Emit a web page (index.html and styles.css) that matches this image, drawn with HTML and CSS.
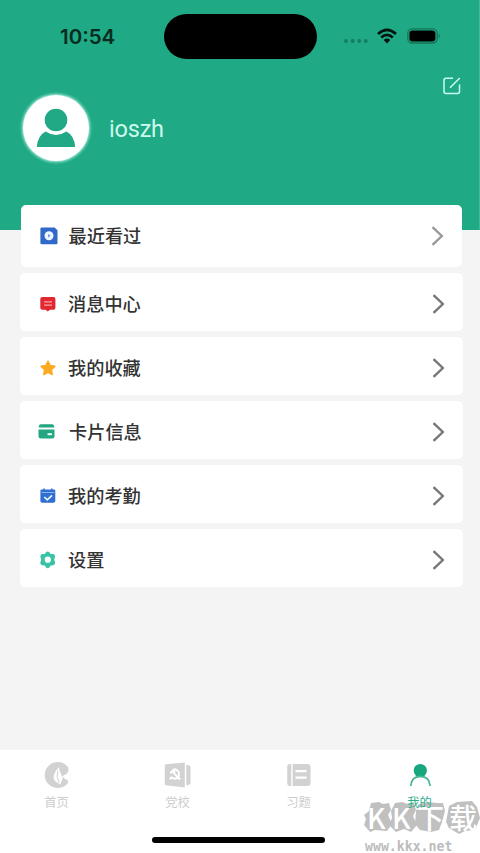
FILE: index.html
```html
<!DOCTYPE html>
<html lang="zh-CN">
<head>
<meta charset="utf-8">
<title>我的</title>
<link rel="stylesheet" href="styles.css">
</head>
<body>
<div class="screen">
  <header class="hero">
    <div class="status">
      <span class="time">10:54</span>
      <span class="island"></span>
      <div class="signals">
        <svg class="dots" width="26" height="6" viewBox="0 0 26 6"><g fill="#137c60"><circle cx="3" cy="3" r="1.9"/><circle cx="9.6" cy="3" r="1.9"/><circle cx="16.2" cy="3" r="1.9"/><circle cx="22.8" cy="3" r="1.9"/></g></svg>
        <svg class="wifi" width="20" height="16" viewBox="0 0 20 16"><g fill="none" stroke="#03130e" stroke-width="2.7"><path d="M1 6Q10-2.2 19 6"/><path d="M4.2 9.4Q10 4.2 15.8 9.4"/></g><path d="M6.7 12Q10 9.2 13.3 12L10 15.4Z" fill="#03130e"/></svg>
        <svg class="battery" width="34" height="16" viewBox="0 0 34 16"><rect x=".8" y=".8" width="29.4" height="14.2" rx="4.5" fill="none" stroke="#137657" stroke-width="1.3"/><rect x="2.4" y="2.4" width="26" height="11" rx="3" fill="#000"/><path d="M31.6 5.5Q34 7.9 31.6 10.4Z" fill="#137657"/></svg>
      </div>
    </div>
    <div class="tools">
      <svg width="18" height="18" viewBox="0 0 18 18" fill="none" stroke="#c9fff0" stroke-width="1.5"><path d="M10 1.2H3Q1 1.2 1 3.2V14.5Q1 16.5 3 16.5H14.5Q16.5 16.5 16.5 14.5V7.5M7 10.8L16.8 1"/></svg>
    </div>
    <div class="profile">
      <div class="avatar">
        <svg width="40" height="40" viewBox="0 0 40 40" fill="#20a984"><circle cx="20" cy="12" r="11.3"/><path d="M.8 39Q1.8 27.5 9.6 23.6Q20 30.5 30.4 23.6Q38.2 27.5 39.2 39Z"/></svg>
      </div>
      <span class="name">ioszh</span>
    </div>
  </header>
  <main class="menu">
    <div class="row first">
      <svg class="icon" width="18" height="18" viewBox="0 0 18 18"><path d="M1.8.5H14.6L17.5 3.2V16Q17.5 17.2 16.3 17.2H1.8Q.4 17.2.4 16V1.8Q.4.5 1.8.5Z" fill="#3069c7"/><circle cx="9" cy="8.8" r="4.5" fill="#eef6ff"/><path d="M8 7.1L10.8 8.8L8 10.5Z" fill="#6f9be0"/></svg>
      <span class="label">最近看过</span>
      <svg class="chevron" width="13" height="20" viewBox="0 0 13 20"><path d="M1.5 1.2L10.8 10L1.5 18.8"/></svg>
    </div>
    <div class="row">
      <svg class="icon" width="18" height="18" viewBox="0 0 18 18"><path d="M3.3 2H14.5Q16.4 2 16.4 4V13Q16.4 14.8 14.5 14.8H11L8.8 16.6L6.6 14.8H3.3Q1.3 14.8 1.3 13V4Q1.3 2 3.3 2Z" fill="#e12730"/><path d="M5 6.8H13M5 10.1H13" stroke="#ffa2a5" stroke-width="1.2"/></svg>
      <span class="label">消息中心</span>
      <svg class="chevron" width="13" height="20" viewBox="0 0 13 20"><path d="M1.5 1.2L10.8 10L1.5 18.8"/></svg>
    </div>
    <div class="row">
      <svg class="icon" width="18" height="18" viewBox="0 0 18 18"><path d="M9 2L11.2 6.5L16 7.2L12.5 10.7L13.3 15.6L9 13.4L4.7 15.6L5.5 10.7L2 7.2L6.8 6.5Z" fill="#fbaa22" stroke="#fbaa22" stroke-width="1.3" stroke-linejoin="round"/></svg>
      <span class="label">我的收藏</span>
      <svg class="chevron" width="13" height="20" viewBox="0 0 13 20"><path d="M1.5 1.2L10.8 10L1.5 18.8"/></svg>
    </div>
    <div class="row card">
      <svg class="icon" width="18" height="18" viewBox="0 0 18 18" fill="#23a783"><path d="M.7 4.5Q.8 1.2 3 1.2H14Q16.2 1.2 16.3 4.5Z"/><path d="M.5 6.6H16.5V13Q16.5 15.5 14 15.5H3Q.5 15.5.5 13Z"/><path d="M9.5 10.2H14V12.2H9.5Z" fill="#e3fff7"/></svg>
      <span class="label">卡片信息</span>
      <svg class="chevron" width="13" height="20" viewBox="0 0 13 20"><path d="M1.5 1.2L10.8 10L1.5 18.8"/></svg>
    </div>
    <div class="row">
      <svg class="icon" width="18" height="18" viewBox="0 0 18 18"><path d="M2.7 2.6H15Q16.3 2.6 16.3 4V14Q16.3 15.8 14.5 15.8H3.2Q1.4 15.8 1.4 14V4Q1.4 2.6 2.7 2.6Z" fill="#306fd1"/><path d="M5 1.4V4M12.8 1.4V4" stroke="#306fd1" stroke-width="1.6"/><path d="M2.5 5.5H15.3" stroke="#85b3f3"/><path d="M5.3 10L8.3 12.8L13 8.3" fill="none" stroke="#e9f4ff" stroke-width="1.7"/></svg>
      <span class="label">我的考勤</span>
      <svg class="chevron" width="13" height="20" viewBox="0 0 13 20"><path d="M1.5 1.2L10.8 10L1.5 18.8"/></svg>
    </div>
    <div class="row">
      <svg class="icon" width="18" height="18" viewBox="0 0 18 18"><path d="M7 1.3Q8.7-.2 10.4 1.3L11.7 3L14.2 3.1Q16.5 3.8 15.9 6.1L15.2 8.8L16 11.2Q16.4 13.7 14.2 14.3L11.7 14.6L10.3 16.4Q8.7 18 7.1 16.4L5.7 14.6L3.2 14.3Q1 13.7 1.4 11.2L2.2 8.8L1.5 6.1Q.9 3.8 3.2 3.1L5.7 3Z" fill="#39c2a5"/><circle cx="8.8" cy="8.7" r="3.1" fill="#fff"/></svg>
      <span class="label">设置</span>
      <svg class="chevron" width="13" height="20" viewBox="0 0 13 20"><path d="M1.5 1.2L10.8 10L1.5 18.8"/></svg>
    </div>
  </main>
  <footer class="dock">
    <nav class="tabs">
      <div class="tab">
        <svg width="28" height="28" viewBox="0 0 28 28"><path d="M24.6 5.6A13 13 0 1 0 24.8 22.2Q26 19.5 23.2 18.6Q20.5 17.8 20.5 14.5Q21.5 13.8 23.2 13.2Q25.8 11.8 25.5 8Q25.5 6.6 24.6 5.6Z" fill="#d2d2d2"/><path d="M16.3 5.7Q15.5 9.5 17.8 12.5Q20.7 17 16.6 23Q9 20.5 11 13.8Q12 10 16.3 5.7Z" fill="#fff"/><path d="M14.9 9.8Q12.7 16 16.2 22" fill="none" stroke="#d2d2d2"/><path d="M17 23Q18 17.5 21 15" fill="none" stroke="#fff" stroke-width="1.2"/></svg>
        <span>首页</span>
      </div>
      <div class="tab">
        <svg width="28" height="28" viewBox="0 0 28 28"><path d="M2 3.3L20.8 1.4V26.4L2 24.3Q.8 24.3.8 23V4.5Q.8 3.3 2 3.3Z" fill="#d2d2d2"/><path d="M22.3 3.8Q26.5 4.3 26.5 6.6V21.8Q26.5 24 22.3 24.5Z" fill="#d2d2d2"/><path d="M9.6 8Q16.4 9.3 14.8 15.2Q12.4 19.5 7 16.2M5.8 18.2L8.1 15.7M6.2 12.3L9 9.5L11.2 11.5M9 11.4L16.2 18.5" fill="none" stroke="#fff" stroke-width="2"/></svg>
        <span>党校</span>
      </div>
      <div class="tab">
        <svg width="28" height="28" viewBox="0 0 28 28"><path d="M5 3H6.2V25H5Q2.2 25 2.2 22V6Q2.2 3 5 3Z" fill="#d2d2d2"/><path d="M7.6 3H22.5Q25.5 3 25.5 6V22Q25.5 25 22.5 25H7.6Z" fill="#d2d2d2"/><path d="M10.5 10.1H21.5M10.5 16.6H21.5" stroke="#fff" stroke-width="2.2"/></svg>
        <span>习题</span>
      </div>
      <div class="tab active">
        <svg width="28" height="28" viewBox="0 0 28 28"><circle cx="14.3" cy="9.5" r="6.6" fill="#17a77f"/><path d="M4.7 25Q5.2 15.7 14.4 15.4Q23.6 15.7 24.1 25" fill="none" stroke="#46b395" stroke-width="1.7"/></svg>
        <span>我的</span>
      </div>
    </nav>
    <div class="home-bar"></div>
    <div class="watermark">
      <div class="brand">
        <svg class="blobs" width="118" height="34" viewBox="0 0 118 34" fill="#c0c0c1"><path d="M8 2L16 1L20 3L26 2L28 9L25 14L29 23L24 30L12 29L7 31L1 24L3 18L1 14L6 10Z"/><path d="M32 2L39 1L45 3L51 2L53 9L50 15L54 24L48 31L41 28L33 31L26 24L29 17L28 10Z"/><path d="M56 3L66 1L74 2L80 2L82 10L79 21L76 29L68 31L57 29L52 23L53 10Z"/><path d="M86 5L94 1L109 0L114 6L117 17L112 29L102 30L96 33L86 27L83 21Z"/></svg>
        <span class="brand-text"><b>K</b><b>K</b><b>下</b><b>载</b></span>
      </div>
      <span class="site">www.kkx.net</span>
    </div>
  </footer>
</div>
</body>
</html>
```
FILE: styles.css
```css
* { box-sizing: border-box; }
body {
  margin: 0;
  font-family: Inter, "Noto Sans CJK SC", sans-serif;
}
svg { display: block; flex: none; }
.screen {
  width: 480px;
  height: 853px;
  display: flex;
  flex-direction: column;
  background: #f4f4f4;
  overflow: hidden;
}
.hero {
  height: 230px;
  flex: none;
  background: #20a985;
  border-right: 1px solid #43b798;
}
.status {
  height: 73px;
  display: grid;
  grid-template-columns: 164px 153px 1fr;
  align-items: center;
}
.time {
  padding-left: 60px;
  font-size: 20.5px;
  font-weight: 600;
  color: #062c21;
  line-height: 24px;
}
.island { height: 45px; border-radius: 23px; background: #000; }
.signals { display: flex; align-items: center; padding-left: 26px; }
.dots { margin-top: 9px; }
.wifi { margin-left: 8px; margin-top: -1px; }
.battery { margin-left: 10px; margin-top: -2px; }
.tools {
  height: 21px;
  padding: 4px 18px 0 0;
  display: flex;
  justify-content: flex-end;
}
.profile { height: 68px; display: flex; align-items: center; padding-left: 23px; }
.avatar {
  width: 66px;
  height: 66px;
  border-radius: 50%;
  background: #fff;
  box-shadow: 0 0 3px 1px #b5f5e3;
  display: flex;
  align-items: center;
  justify-content: center;
}
.name {
  margin-left: 20px;
  padding-top: 1px;
  font-family: Roboto, sans-serif;
  font-size: 23.5px;
  letter-spacing: -.2px;
  color: #cbfbec;
}
.menu {
  flex: 1;
  margin-top: -25px;
  padding: 0 17px 0 19.5px;
  display: flex;
  flex-direction: column;
  gap: 6px;
}
.row {
  height: 58px;
  flex: none;
  border-radius: 5px;
  background: #fff;
  display: flex;
  align-items: center;
  padding: 3px 18px 0 19.5px;
}
.row.first { height: 62px; margin: 0 1px 0 1.5px; padding-top: 0; padding-left: 18.5px; }
.label {
  margin: -2px 0 0 11px;
  font-family: "Noto Sans CJK SC", sans-serif;
  font-size: 18.2px;
  line-height: 26px;
  font-weight: 500;
  color: #333;
}
.card .icon { margin-left: -1px; }
.card .label { margin-left: 13px; }
.chevron { margin-left: auto; fill: none; stroke: #777; stroke-width: 2.4; }
.first .chevron { stroke: #999; }
.dock { height: 103px; flex: none; background: #fff; position: relative; }
.tabs {
  position: relative;
  z-index: 1;
  display: grid;
  grid-template-columns: repeat(4, 121px);
  padding: 11px 0 0;
  margin-left: -4px;
}
.tab {
  display: flex;
  flex-direction: column;
  align-items: center;
  gap: 4px;
  font-family: "Noto Sans CJK SC", sans-serif;
  font-size: 12.3px;
  line-height: 18px;
  color: #cdcdcd;
}
.active { color: #32ad8b; }
.home-bar { width: 173px; height: 6px; margin: 26px 0 0 152px; border-radius: 3px; background: #000; }
.watermark { position: absolute; left: 363px; top: 51px; width: 118px; }
.brand { position: relative; }
.brand-text {
  position: absolute;
  left: 4px;
  top: -2px;
  display: grid;
  grid-template-columns: 25px 24px 33px 32px;
  font-family: "Noto Sans CJK SC", sans-serif;
  font-size: 28px;
  line-height: 36px;
  color: #fff;
}
.brand-text b { font-weight: 500; }
.site {
  display: block;
  margin: 4px 0 0 2px;
  font-family: "DejaVu Sans Mono", monospace;
  font-size: 13.2px;
  line-height: 15px;
  font-weight: 700;
  color: #bcbcbc;
}
```
